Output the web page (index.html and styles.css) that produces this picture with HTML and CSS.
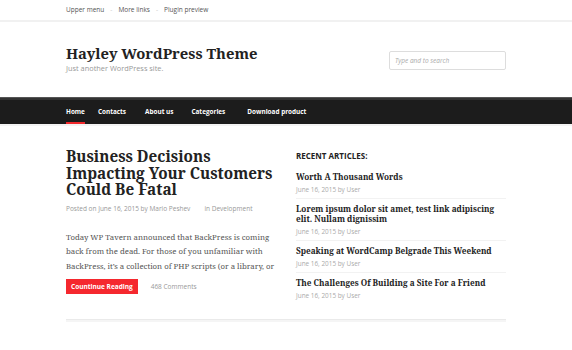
FILE: index.html
```html
<!DOCTYPE html>
<html lang="en">
<head>
  <meta charset="UTF-8" />
  <title>Hayley WordPress Theme</title>
  <link rel="stylesheet" href="styles.css">
</head>
<body>
  <div class="topbar">
    <div class="wrap">
      <ul class="upper-menu">
        <li>Upper menu</li>
        <li>More links</li>
        <li>Plugin preview</li>
      </ul>
    </div>
  </div>

  <header class="site-header">
    <div class="wrap header-row">
      <div class="brand">
        <h1>Hayley WordPress Theme</h1>
        <p class="tagline">Just another WordPress site.</p>
      </div>
      <div class="search">Type and to search</div>
    </div>
  </header>

  <nav class="main-nav">
    <div class="wrap">
      <ul>
        <li class="current">Home</li>
        <li>Contacts</li>
        <li>About us</li>
        <li>Categories</li>
        <li>Download product</li>
      </ul>
    </div>
  </nav>

  <div class="wrap content">
    <article class="post">
      <h2>Business Decisions Impacting Your Customers Could Be Fatal</h2>
      <div class="post-meta">
        <span>Posted on June 16, 2015 by Mario Peshev</span>
        <span>in Development</span>
      </div>
      <p class="excerpt">Today WP Tavern announced that BackPress is coming back from the dead. For those of you unfamiliar with BackPress, it&rsquo;s a collection of PHP scripts (or a library, or</p>
      <div class="post-foot">
        <a class="btn">Countinue Reading</a>
        <span class="comments">468 Comments</span>
      </div>
    </article>

    <aside class="sidebar">
      <h3>RECENT ARTICLES:</h3>
      <ul class="recent">
        <li>
          <a>Worth A Thousand Words</a>
          <span>June 16, 2015 by User</span>
        </li>
        <li>
          <a>Lorem ipsum dolor sit amet, test link adipiscing elit. Nullam dignissim</a>
          <span>June 16, 2015 by User</span>
        </li>
        <li>
          <a>Speaking at WordCamp Belgrade This Weekend</a>
          <span>June 16, 2015 by User</span>
        </li>
        <li>
          <a>The Challenges Of Building a Site For a Friend</a>
          <span>June 16, 2015 by User</span>
        </li>
      </ul>
    </aside>
  </div>
  <div class="wrap"><div class="divider"></div></div>
</body>
</html>
```

FILE: styles.css
```css
body {
  margin: 0;
  background: #fff;
  color: #333;
  font-family: "Open Sans", "Noto Sans", sans-serif;
}
ul {
  list-style: none;
  margin: 0;
  padding: 0;
}
.wrap {
  width: 440px;
  margin: 0 auto;
}
.topbar {
  border-bottom: 2px solid #f1f1f1;
  height: 20px;
}
.upper-menu {
  display: flex;
  font-size: 6.5px;
  color: #555;
  line-height: 20px;
}
.upper-menu li + li::before {
  content: "-";
  color: #ccc;
  margin: 0 6px;
}
.site-header {
  height: 75px;
  border-bottom: 1px solid #555;
}
.header-row {
  display: flex;
  justify-content: space-between;
  align-items: flex-start;
  padding-top: 21px;
}
.brand h1 {
  margin: 0;
  font-family: "Noto Serif", "DejaVu Serif", serif;
  font-size: 14.8px;
  line-height: 20px;
  color: #222;
  font-weight: bold;
}
.tagline {
  margin: 0;
  font-size: 7.4px;
  color: #999;
  line-height: 10px;
}
.search {
  width: 110px;
  height: 17px;
  margin-top: 8px;
  border: 1px solid #ddd;
  border-radius: 2px;
  font-size: 6.5px;
  font-style: italic;
  color: #aaa;
  line-height: 17px;
  padding-left: 5px;
}
.main-nav {
  background: #1c1c1c;
  border-top: 2px solid #333;
  height: 24px;
  border-bottom: 2px solid #f3f3f3;
}
.main-nav ul {
  display: flex;
}
.main-nav li {
  font-size: 6.4px;
  font-weight: bold;
  color: #fff;
  line-height: 24px;
  height: 24px;
  box-sizing: border-box;
}
.main-nav li:nth-child(1) { margin-right: 13px; }
.main-nav li:nth-child(2) { margin-right: 19px; }
.main-nav li:nth-child(3) { margin-right: 18px; }
.main-nav li:nth-child(4) { margin-right: 22px; }
.main-nav li.current {
  border-bottom: 2px solid #f0282c;
}
.content {
  display: flex;
  justify-content: space-between;
  padding-top: 22px;
}
.post {
  width: 218px;
}
.post h2 {
  margin: 0;
  font-family: "Noto Serif", "DejaVu Serif", serif;
  font-size: 15.3px;
  line-height: 16.5px;
  color: #222;
}
.post-meta {
  margin-top: 6px;
  font-size: 6.5px;
  color: #999;
  display: flex;
  gap: 14px;
}
.excerpt {
  margin: 17px 0 0;
  font-family: "Noto Serif", "DejaVu Serif", serif;
  font-size: 7.8px;
  line-height: 14.5px;
  color: #555;
}
.post-foot {
  margin-top: 6px;
  display: flex;
  align-items: center;
  gap: 13px;
}
.btn {
  background: #f5282e;
  color: #fff;
  font-size: 6.5px;
  font-weight: bold;
  padding: 0 5px;
  line-height: 15px;
  height: 15px;
}
.comments {
  font-size: 6.5px;
  color: #999;
}
.sidebar {
  width: 210px;
  padding-top: 2px;
}
.sidebar h3 {
  margin: 0 0 5px;
  font-size: 8px;
  font-weight: bold;
  color: #222;
  line-height: 12px;
}
.recent li {
  display: flex;
  flex-direction: column;
  border-bottom: 1px solid #f2f2f2;
  padding: 5px 0 3px;
}
.recent li:last-child {
  border-bottom: none;
}
.recent a {
  font-family: "Noto Serif", "DejaVu Serif", serif;
  font-size: 8.2px;
  font-weight: bold;
  line-height: 10px;
  color: #222;
}
.recent span {
  font-size: 6.4px;
  color: #aaa;
  line-height: 11px;
  margin-top: 2px;
}
.divider {
  margin-top: 15px;
  height: 2px;
  border-top: 1px solid #eaeaea;
  background: #f5f5f5;
}
```
